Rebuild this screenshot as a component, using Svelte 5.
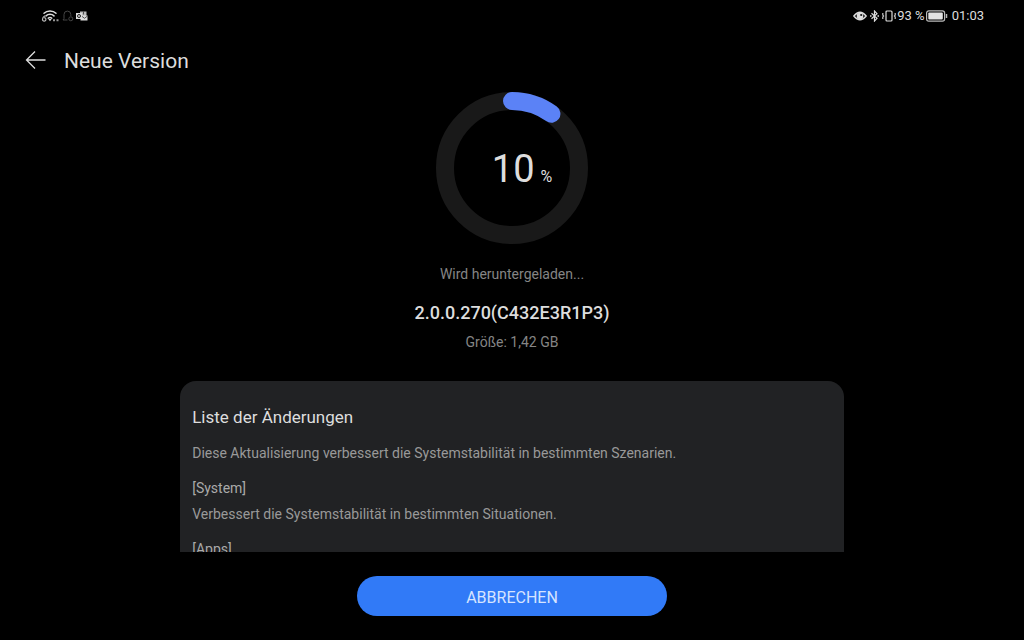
<script>
  const percent = 10;
  const radius = 67;
  const length = 2 * Math.PI * radius;
  const notes = [
    { heading: '[System]', text: 'Verbessert die Systemstabilität in bestimmten Situationen.' },
    { heading: '[Apps]', text: '' }
  ];
</script>

<div class="screen">
  <div class="status">
    <div class="group">
      <svg width="19" height="12" viewBox="0 0 19 12" role="img" aria-label="WLAN">
        <g fill="none" stroke="#ddd" stroke-width="1.5" stroke-linecap="round">
          <path d="M3 3.300C6 .2 12 .2 15 3.300M5 5.900C7.200 3.800 10.800 3.800 13 5.900" />
          <path d="M7.300 8.200Q9 7 10.700 8.200" />
        </g>
        <path d="M7.300 9h3.400L9 11.300z" fill="#ddd" />
        <path d="M4 5.800Q1.500 7 1.500 9.300A1.700 1.700 0 1 0 3 7.700" fill="none" stroke="#bbb" stroke-width="1.200" />
        <path d="M12 9.200h2v2h-2zM15.500 9.200h2v2h-2z" fill="#999" />
      </svg>
      <svg width="12" height="12" viewBox="0 0 12 12" role="img" aria-label="Benachrichtigung">
        <path d="M5.500 10H1L2 8.500V4.500a3.200 3.200 0 0 1 6.800 0V6" fill="none" stroke="#444" />
        <circle cx="8.800" cy="8.800" r="2" fill="none" stroke="#444" />
      </svg>
      <svg width="12" height="12" viewBox="0 0 12 12" role="img" aria-label="Outlook">
        <path d="M4 1.500h6.500V6H4z" fill="#bbb" />
        <path d="M4.500 5.500h7V10.500h-7z" fill="#ddd" />
        <path d="M5.500 6l3 2.300L11.500 6M7.500 1.500v3" fill="none" stroke="#333" stroke-width=".8" />
        <path d="M0 3h6v6H0z" fill="#ddd" />
        <circle cx="3" cy="6" r="1.500" fill="none" stroke="#222" />
      </svg>
    </div>
    <div class="group right">
      <svg width="14" height="12" viewBox="0 0 14 12" role="img" aria-label="Augenkomfort">
        <path d="M.8 6Q7-1.500 13.200 6Q7 13.500 .8 6z" fill="none" stroke="#ddd" stroke-width="1.300" />
        <circle cx="7" cy="6" r="3.300" fill="#ddd" />
        <circle cx="8.200" cy="5" r="1.100" fill="#111" />
      </svg>
      <svg width="13" height="12" viewBox="0 0 13 12" role="img" aria-label="Bluetooth">
        <path d="M3.500 3.300l5.500 5L6.500 11V1L9 3.700l-5.500 5" fill="none" stroke="#ddd" stroke-width="1.200" />
        <path d="M2 5.300h1.500v1.400H2zM9.500 5.300H11v1.400H9.500z" fill="#ddd" />
      </svg>
      <svg width="14" height="12" viewBox="0 0 14 12" role="img" aria-label="Vibration">
        <rect x="4" y="1" width="6" height="10" rx="1" fill="none" stroke="#ddd" stroke-width="1.200" />
        <path d="M.8 3v2l.8 1-.8 1v2M13.200 3v2l-.8 1 .8 1v2" fill="none" stroke="#ccc" stroke-width="1.200" />
      </svg>
      <span>93 %</span>
      <svg width="22" height="12" viewBox="0 0 22 12" role="img" aria-label="Akku">
        <rect x=".6" y=".8" width="18" height="10.400" rx="2.200" fill="none" stroke="#bbb" stroke-width="1.200" />
        <rect x="2.300" y="2.500" width="14.500" height="7" rx="1" fill="#e2e2e2" />
        <path d="M20.500 4v4" stroke="#bbb" stroke-width="1.500" />
      </svg>
      <time>01:03</time>
    </div>
  </div>

  <header>
    <button class="back" aria-label="Zurück">
      <svg width="22" height="20" viewBox="0 0 22 20" aria-hidden="true">
        <path d="M20.500 10H1.500M10 1.500L1.500 10l8.500 8.500" fill="none" stroke="#ddd" stroke-width="1.300" />
      </svg>
    </button>
    <h1>Neue Version</h1>
  </header>

  <main>
    <div class="progress" role="progressbar" aria-label="Download" aria-valuenow={percent} aria-valuemin="0" aria-valuemax="100">
      <svg width="152" height="152" viewBox="0 0 152 152" aria-hidden="true">
        <g fill="none" stroke-width="18" transform="rotate(-90 76 76)">
          <circle cx="76" cy="76" r={radius} stroke="#191919" />
          <circle cx="76" cy="76" r={radius} stroke="#5b82f6" stroke-linecap="round" stroke-dasharray="{length * percent / 100} {length}" />
        </g>
      </svg>
      <div class="value"><strong>{percent}</strong><span>%</span></div>
    </div>
    <p class="state">Wird heruntergeladen...</p>
    <h2>2.0.0.270(C432E3R1P3)</h2>
    <p class="size">Größe: 1,42 GB</p>
    <section class="changes">
      <h3>Liste der Änderungen</h3>
      <p>Diese Aktualisierung verbessert die Systemstabilität in bestimmten Szenarien.</p>
      {#each notes as note}
        <h4>{note.heading}</h4>
        <p>{note.text}</p>
      {/each}
    </section>
  </main>

  <footer><button class="cancel">ABBRECHEN</button></footer>
</div>

<style>
  :global(body) { margin: 0; background: #000; }
  .screen {
    box-sizing: border-box;
    height: 100vh;
    display: flex;
    flex-direction: column;
    background: #000;
    color: #ddd;
    font-family: Roboto, "Noto Sans", sans-serif;
    font-size: 14px;
  }
  svg { display: block; flex: none; }
  h1, h2, h3, h4, p { margin: 0; font-weight: 400; }
  button { border: 0; padding: 0; font: inherit; color: inherit; cursor: pointer; }
  .status {
    display: flex;
    justify-content: space-between;
    padding: 8px 40px 0 41px;
    height: 16px;
    font-size: 13px;
    line-height: 16px;
  }
  .group { display: flex; align-items: center; gap: 2px; }
  .right { gap: 1px; }
  time { margin-left: 3px; }
  header {
    display: flex;
    align-items: center;
    gap: 17px;
    height: 28px;
    padding: 22px 25px 18px;
  }
  .back { background: none; }
  h1 { font-size: 21px; line-height: 28px; padding-top: 2px; }
  main {
    flex: 1;
    min-height: 0;
    display: flex;
    flex-direction: column;
    align-items: center;
  }
  .progress { display: grid; place-items: center; flex: none; }
  .progress > * { grid-area: 1 / 1; }
  .value {
    display: flex;
    align-items: baseline;
    gap: 6px;
    padding: 2px 0 0 20px;
  }
  strong { font-size: 38px; line-height: 44px; font-weight: 400; }
  .value span { font-size: 16px; }
  .state, .size { color: #858585; line-height: 20px; }
  .state { margin-top: 20px; }
  h2 { margin-top: 16px; font-size: 18px; line-height: 26px; font-weight: 500; }
  .size { margin-top: 6px; }
  .changes {
    box-sizing: border-box;
    flex: 1;
    min-height: 0;
    width: 64.8%;
    margin-top: 29px;
    padding: 24px 12px;
    overflow-y: auto;
    scrollbar-width: none;
    border-radius: 16px 16px 0 0;
    background: #212224;
    color: #999;
    line-height: 20px;
  }
  h3 { margin-bottom: 14px; color: #ddd; font-size: 17px; line-height: 24px; }
  h4 { margin: 15px 0 6px; color: #aaa; font-size: 14px; }
  footer { display: flex; justify-content: center; padding: 24px; }
  .cancel {
    width: 310px;
    height: 40px;
    padding-top: 2px;
    border-radius: 20px;
    background: #317af7;
    color: #d6e4ff;
    font-size: 16px;
  }
</style>
